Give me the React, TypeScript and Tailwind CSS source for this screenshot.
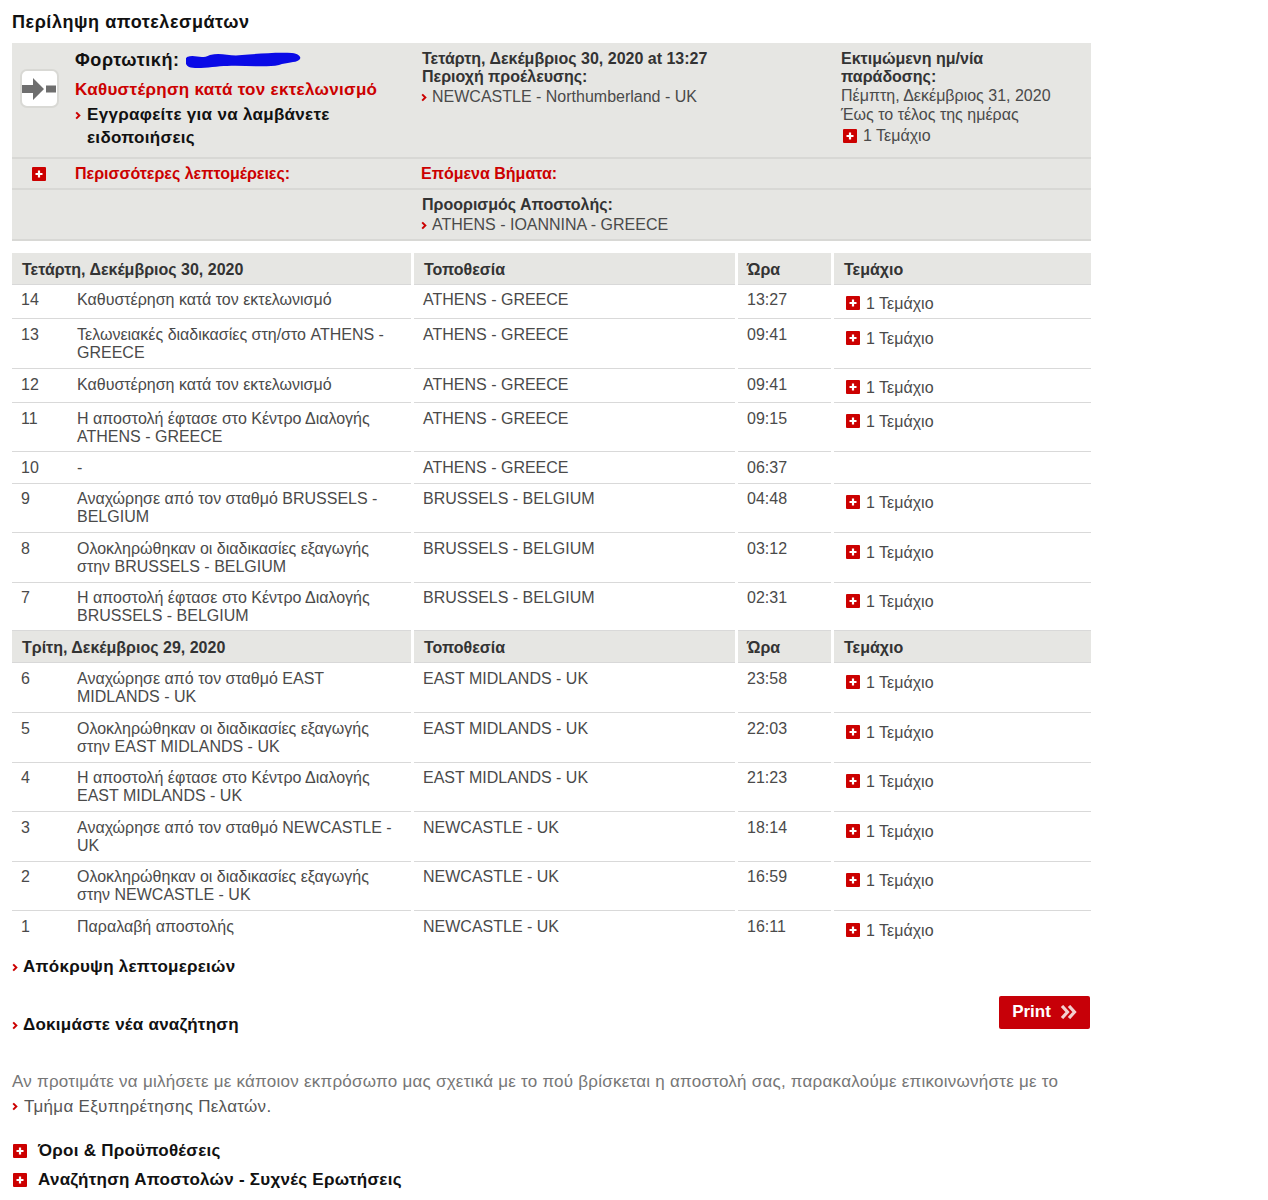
import React from "react";

type Row = { n: string; text: string[]; loc: string; time: string; h: string; tp: string; ip: string; noPiece?: boolean };

const firstDay: Row[] = [
  { n: "14", text: ["Καθυστέρηση κατά τον εκτελωνισμό"], loc: "ATHENS - GREECE", time: "13:27", h: "h-[34px]", tp: "pt-[6px]", ip: "pt-[10px]" },
  { n: "13", text: ["Τελωνειακές διαδικασίες στη/στο ATHENS -", "GREECE"], loc: "ATHENS - GREECE", time: "09:41", h: "h-[50px]", tp: "pt-[7px]", ip: "pt-[11px]" },
  { n: "12", text: ["Καθυστέρηση κατά τον εκτελωνισμό"], loc: "ATHENS - GREECE", time: "09:41", h: "h-[34px]", tp: "pt-[7px]", ip: "pt-[10px]" },
  { n: "11", text: ["Η αποστολή έφτασε στο Κέντρο Διαλογής", "ATHENS - GREECE"], loc: "ATHENS - GREECE", time: "09:15", h: "h-[49px]", tp: "pt-[7px]", ip: "pt-[10px]" },
  { n: "10", text: ["-"], loc: "ATHENS - GREECE", time: "06:37", h: "h-[32px]", tp: "pt-[7px]", ip: "pt-[10px]", noPiece: true },
  { n: "9", text: ["Αναχώρησε από τον σταθμό BRUSSELS -", "BELGIUM"], loc: "BRUSSELS - BELGIUM", time: "04:48", h: "h-[49px]", tp: "pt-[6px]", ip: "pt-[10px]" },
  { n: "8", text: ["Ολοκληρώθηκαν οι διαδικασίες εξαγωγής", "στην BRUSSELS - BELGIUM"], loc: "BRUSSELS - BELGIUM", time: "03:12", h: "h-[50px]", tp: "pt-[7px]", ip: "pt-[11px]" },
  { n: "7", text: ["Η αποστολή έφτασε στο Κέντρο Διαλογής", "BRUSSELS - BELGIUM"], loc: "BRUSSELS - BELGIUM", time: "02:31", h: "h-[48px]", tp: "pt-[6px]", ip: "pt-[10px]" },
];

const secondDay: Row[] = [
  { n: "6", text: ["Αναχώρησε από τον σταθμό EAST", "MIDLANDS - UK"], loc: "EAST MIDLANDS - UK", time: "23:58", h: "h-[50px]", tp: "pt-[7px]", ip: "pt-[11px]" },
  { n: "5", text: ["Ολοκληρώθηκαν οι διαδικασίες εξαγωγής", "στην EAST MIDLANDS - UK"], loc: "EAST MIDLANDS - UK", time: "22:03", h: "h-[50px]", tp: "pt-[7px]", ip: "pt-[11px]" },
  { n: "4", text: ["Η αποστολή έφτασε στο Κέντρο Διαλογής", "EAST MIDLANDS - UK"], loc: "EAST MIDLANDS - UK", time: "21:23", h: "h-[49px]", tp: "pt-[6px]", ip: "pt-[10px]" },
  { n: "3", text: ["Αναχώρησε από τον σταθμό NEWCASTLE -", "UK"], loc: "NEWCASTLE - UK", time: "18:14", h: "h-[50px]", tp: "pt-[7px]", ip: "pt-[11px]" },
  { n: "2", text: ["Ολοκληρώθηκαν οι διαδικασίες εξαγωγής", "στην NEWCASTLE - UK"], loc: "NEWCASTLE - UK", time: "16:59", h: "h-[49px]", tp: "pt-[6px]", ip: "pt-[10px]" },
  { n: "1", text: ["Παραλαβή αποστολής"], loc: "NEWCASTLE - UK", time: "16:11", h: "h-[34px]", tp: "pt-[7px]", ip: "pt-[11px]" },
];

function PlusBox({ className = "" }: { className?: string }) {
  return (
    <svg viewBox="0 0 14 14" className={`w-[14px] h-[14px] shrink-0 ${className}`}>
      <rect width="14" height="14" rx="1" fill="#cc0000" />
      <path d="M7 3.500v7M3.500 7h7" stroke="#fff" strokeWidth="2.200" />
    </svg>
  );
}

function Chevron({ className = "" }: { className?: string }) {
  return (
    <svg viewBox="0 0 6 10" className={`w-[6px] h-[9px] shrink-0 ${className}`}>
      <path d="M1 1.500L4.500 5 1 8.500" fill="none" stroke="#cc0000" strokeWidth="2.200" />
    </svg>
  );
}

function Piece() {
  return (
    <div className="flex items-center gap-[6px]">
      <PlusBox className="mb-[2px]" />
      <span>1 Τεμάχιο</span>
    </div>
  );
}

function HeaderRow({ date }: { date: string }) {
  const cell = "h-[32px] pt-[2px] bg-[#e6e6e3] border-b border-[#d8d8d8] flex items-center font-bold text-[#333] text-[16px]";
  return (
    <div className="grid grid-cols-[399px_321px_93px_257px] gap-x-[3px]">
      <div className={`${cell} pl-[10px]`}>{date}</div>
      <div className={`${cell} pl-[10px]`}>Τοποθεσία</div>
      <div className={`${cell} pl-[9px]`}>Ώρα</div>
      <div className={`${cell} pl-[10px]`}>Τεμάχιο</div>
    </div>
  );
}

function TrackRow({ row, last }: { row: Row; last?: boolean }) {
  const cell = `${row.h} ${last ? "" : "border-b border-[#d9d9d9]"}`;
  return (
    <div className="grid grid-cols-[399px_321px_93px_257px] gap-x-[3px] text-[#4a4a4a] text-[16px] leading-[18px]">
      <div className={`${cell} flex ${row.tp}`}>
        <div className="w-[65px] pl-[9px] shrink-0">{row.n}</div>
        <div>
          {row.text.map((t) => (
            <div key={t}>{t}</div>
          ))}
        </div>
      </div>
      <div className={`${cell} ${row.tp} pl-[9px]`}>{row.loc}</div>
      <div className={`${cell} ${row.tp} pl-[9px]`}>{row.time}</div>
      <div className={`${cell} ${row.ip} pl-[12px]`}>{!row.noPiece && <Piece />}</div>
    </div>
  );
}

function SummaryIcon() {
  return (
    <div className="w-[39px] h-[39px] rounded-[7px] bg-white border-2 border-[#d9d9d5] flex items-center justify-center">
      <svg viewBox="0 0 35 22" className="w-[35px] h-[22px]">
        <path d="M0 7h11V0l11 11-11 11v-7H0zM24 7.500h10v7H24z" fill="#6e6e6e" />
      </svg>
    </div>
  );
}

export default function App() {
  return (
    <div className="bg-white w-[1268px] h-[1200px] overflow-hidden pl-[12px] pt-[11px] text-[16px] leading-[18px] text-[#333]" style={{ fontFamily: '"Liberation Sans", Arial, sans-serif' }}>
      <h2 className="text-[18px] leading-[22px] font-bold text-[#111] tracking-[0.55px] mb-[10px]">Περίληψη αποτελεσμάτων</h2>

      {/* summary panel */}
      <div className="w-[1079px] bg-[#e6e6e3] border-b-2 border-[#d8d8d5]">
        <div className="flex h-[116px] border-b-2 border-[#d8d8d5]">
          <div className="w-[63px] pl-[8px] pt-[26px] shrink-0">
            <SummaryIcon />
          </div>
          <div className="w-[346px] shrink-0 pt-[5px]">
            <div className="flex items-center text-[18px] leading-[24px] font-bold text-[#111] tracking-[0.6px]">
              Φορτωτική:
              <svg viewBox="0 0 116 18" className="w-[116px] h-[18px] ml-[6px]">
                <path d="M1 6C10 3 14 9 24 4c12-3 20 2 32 0 14-1 34-3 50-2 8 1 10 5 7 7-4 3-12 2-20 5-14 3-34 0-52 1-12 0-30 4-38 1-4-2-5-7-2-10z" fill="#0a0ae6" />
              </svg>
            </div>
            <div className="mt-[6px] text-[17px] leading-[24px] font-bold text-[#cc0000] tracking-[0.3px]">Καθυστέρηση κατά τον εκτελωνισμό</div>
            <div className="mt-[1px] flex text-[#111] font-bold text-[17px] leading-[23px] tracking-[0.3px]">
              <Chevron className="mt-[8px] mr-[6px]" />
              <span className="w-[270px]">Εγγραφείτε για να λαμβάνετε ειδοποιήσεις</span>
            </div>
          </div>
          <div className="w-[420px] shrink-0 pt-[7px]">
            <div className="font-bold pl-[1px]">Τετάρτη, Δεκέμβριος 30, 2020 at 13:27</div>
            <div className="font-bold pl-[1px]">Περιοχή προέλευσης:</div>
            <div className="flex items-center gap-[5px] text-[#4a4a4a] mt-[2px]">
              <Chevron />
              NEWCASTLE - Northumberland - UK
            </div>
          </div>
          <div className="pt-[7px]">
            <div className="font-bold w-[170px]">Εκτιμώμενη ημ/νία παράδοσης:</div>
            <div className="text-[#4a4a4a] mt-[1px]">Πέμπτη, Δεκέμβριος 31, 2020</div>
            <div className="text-[#4a4a4a] mt-[1px]">Έως το τέλος της ημέρας</div>
            <div className="flex items-center gap-[6px] text-[#4a4a4a] mt-[3px] pl-[2px]">
              <PlusBox />
              1 Τεμάχιο
            </div>
          </div>
        </div>
        <div className="flex items-center h-[31px] border-b-2 border-[#d8d8d5] font-bold text-[#cc0000]">
          <div className="w-[63px] pl-[20px] shrink-0">
            <PlusBox />
          </div>
          <div className="w-[346px] shrink-0">Περισσότερες λεπτομέρειες:</div>
          <div>Επόμενα Βήματα:</div>
        </div>
        <div className="h-[49px] pl-[409px] pt-[6px]">
          <div className="font-bold pl-[1px]">Προορισμός Αποστολής:</div>
          <div className="flex items-center gap-[5px] text-[#4a4a4a] mt-[2px]">
            <Chevron />
            ATHENS - IOANNINA - GREECE
          </div>
        </div>
      </div>

      {/* tracking history */}
      <div className="mt-[12px]">
        <HeaderRow date="Τετάρτη, Δεκέμβριος 30, 2020" />
        {firstDay.map((r) => (
          <TrackRow key={r.n} row={r} />
        ))}
        <HeaderRow date="Τρίτη, Δεκέμβριος 29, 2020" />
        {secondDay.map((r, i) => (
          <TrackRow key={r.n} row={r} last={i === secondDay.length - 1} />
        ))}
      </div>

      {/* links */}
      <div className="w-[1079px] mt-[11px]">
        <div className="flex items-center gap-[5px] h-[22px] font-bold text-[17px] text-[#111] tracking-[0.25px]">
          <Chevron />
          Απόκρυψη λεπτομερειών
        </div>
        <div className="flex justify-between items-start mt-[18px]">
          <div className="flex items-center gap-[5px] h-[22px] mt-[18px] font-bold text-[17px] text-[#111] tracking-[0.25px]">
            <Chevron />
            Δοκιμάστε νέα αναζήτηση
          </div>
          <button className="w-[91px] h-[33px] mr-[1px] rounded-[2px] bg-[#c70008] text-white font-bold text-[17px] pb-[1px] flex items-center justify-center gap-[9px]">
            Print
            <svg viewBox="0 0 17 14" className="w-[17px] h-[14px]">
              <path d="M2 1l5.500 6L2 13M9 1l5.500 6L9 13" fill="none" stroke="#f3d0d0" strokeWidth="3.200" />
            </svg>
          </button>
        </div>
      </div>

      <p className="w-[1079px] mt-[33px] text-[#767676] text-[17px] leading-[25px] tracking-[0.24px]">
        Αν προτιμάτε να μιλήσετε με κάποιον εκπρόσωπο μας σχετικά με το πού βρίσκεται η αποστολή σας, παρακαλούμε επικοινωνήστε με το
      </p>
      <div className="flex items-center gap-[6px] h-[25px] text-[17px] text-[#555] tracking-[0.3px]">
        <Chevron />
        Τμήμα Εξυπηρέτησης Πελατών.
      </div>

      <div className="mt-[21px] flex items-center gap-[11px] h-[22px] font-bold text-[17px] text-[#111] tracking-[0.27px]">
        <PlusBox className="ml-[1px]" />
        Όροι &amp; Προϋποθέσεις
      </div>
      <div className="mt-[7px] flex items-center gap-[11px] h-[22px] font-bold text-[17px] text-[#111] tracking-[0.27px]">
        <PlusBox className="ml-[1px]" />
        Αναζήτηση Αποστολών - Συχνές Ερωτήσεις
      </div>
    </div>
  );
}
